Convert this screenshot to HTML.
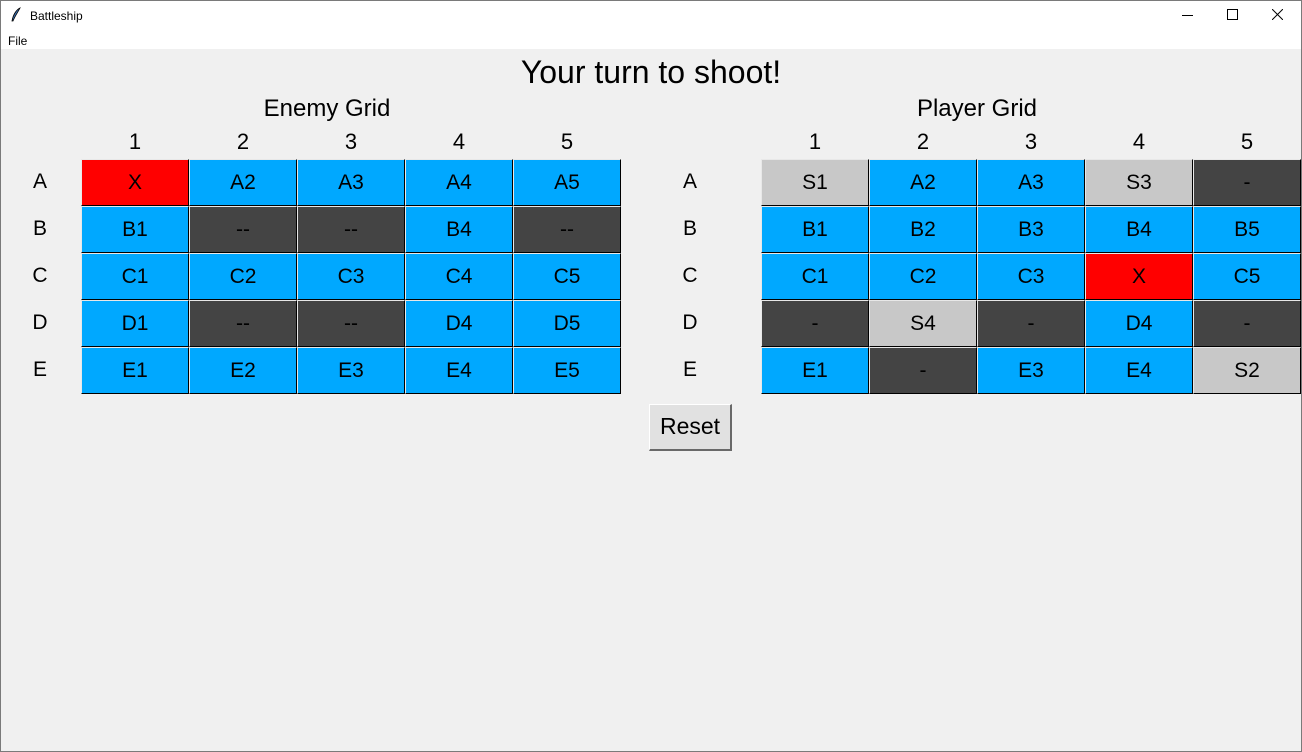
<!DOCTYPE html>
<html><head><style>
body{margin:0;width:1302px;height:752px;background:#f0f0f0;font-family:"Liberation Sans",Arial,sans-serif;position:relative;overflow:hidden}
.tb{position:absolute;left:0;top:0;width:1302px;height:31px;background:#fff}
.mb{position:absolute;left:0;top:31px;width:1302px;height:18px;background:#fff}
.win{position:absolute;left:0;top:0;width:1300px;height:750px;border:1px solid #7a7a7a;pointer-events:none}
.t{position:absolute;color:#000;text-align:center}
.c{position:absolute;width:106px;height:45px;box-sizing:content-box;border-top:1px solid #e8e8e8;border-left:1px solid #e8e8e8;border-right:1px solid #000;border-bottom:1px solid #000;font-size:21px;line-height:45px;text-align:center;color:#000}
.b{background:#00a8ff}.r{background:#ff0000}.d{background:#444}.l{background:#c8c8c8}
</style></head><body>
<div class="tb"></div><div class="mb"></div>
<svg style="position:absolute;left:10px;top:7px" width="12" height="16" viewBox="0 0 12 16"><path d="M10 1 C6 3 3 8 2 14 L3 14 C5 9 8 5 10 1Z" fill="#3a6fb0" stroke="#000" stroke-width="0.8"/></svg>
<div class="t" style="left:30px;top:9px;font-size:12px">Battleship</div>
<div class="t" style="left:8px;top:34px;font-size:12px">File</div>
<div style="position:absolute;left:1182px;top:15px;width:11px;height:1px;background:#000"></div>
<div style="position:absolute;left:1227px;top:9px;width:9px;height:9px;border:1px solid #000"></div>
<svg style="position:absolute;left:1272px;top:9px" width="11" height="11"><path d="M0 0L11 11M11 0L0 11" stroke="#000" stroke-width="1"/></svg>
<div class="t" style="left:0;width:1302px;top:54px;font-size:32px">Your turn to shoot!</div>
<div class="t" style="left:227px;width:200px;top:95px;font-size:24px">Enemy Grid</div>
<div class="t" style="left:877px;width:200px;top:95px;font-size:24px">Player Grid</div>
<div id="g"></div>
<div style="position:absolute;left:649px;top:404px;width:83px;height:47px;background:#e1e1e1;border-top:1px solid #fff;border-left:1px solid #fff;border-right:2px solid #696969;border-bottom:2px solid #696969;box-sizing:border-box"></div>
<div class="t" style="left:649px;width:82px;top:413px;font-size:23px">Reset</div>
<div class="win"></div>
<script>
var g=document.getElementById('g'),h='';
var rows='ABCDE';
var E=[['r:X','b:A2','b:A3','b:A4','b:A5'],['b:B1','d:--','d:--','b:B4','d:--'],['b:C1','b:C2','b:C3','b:C4','b:C5'],['b:D1','d:--','d:--','b:D4','b:D5'],['b:E1','b:E2','b:E3','b:E4','b:E5']];
var P=[['l:S1','b:A2','b:A3','l:S3','d:-'],['b:B1','b:B2','b:B3','b:B4','b:B5'],['b:C1','b:C2','b:C3','r:X','b:C5'],['d:-','l:S4','d:-','b:D4','d:-'],['b:E1','d:-','b:E3','b:E4','l:S2']];
function grid(x0,lx,D){for(var i=0;i<5;i++){h+='<div class="t" style="left:'+(x0+108*i)+'px;width:108px;top:129px;font-size:22px">'+(i+1)+'</div>';}
for(var j=0;j<5;j++){h+='<div class="t" style="left:'+(lx-30)+'px;width:60px;top:'+(170+47*j)+'px;font-size:21px">'+rows[j]+'</div>';
for(var i=0;i<5;i++){var p=D[j][i].split(':');h+='<div class="c '+p[0]+'" style="left:'+(x0+108*i)+'px;top:'+(159+47*j)+'px">'+p[1]+'</div>';}}}
grid(81,40,E);grid(761,690,P);g.innerHTML=h;
</script>
</body></html>
